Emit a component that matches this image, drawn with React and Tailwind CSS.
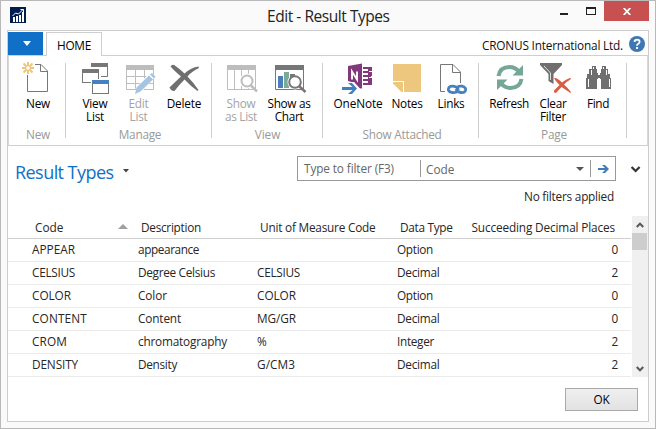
import React, { useLayoutEffect, useRef } from "react";

// Single-line label whose tracking is adjusted so that it spans `w` pixels.
function Label({ w, children, className = "" }) {
  const ref = useRef(null);
  useLayoutEffect(() => {
    const el = ref.current;
    el.style.letterSpacing = "0px";
    const natural = el.getBoundingClientRect().width;
    const gap = (w - natural) / children.length;
    el.style.letterSpacing = gap + "px";
  }, [w, children]);
  return (
    <span ref={ref} className={"inline-block whitespace-pre " + className}>
      {children}
    </span>
  );
}

function Tool({ lines, widths, box, className, muted, children }) {
  return (
    <div className={"flex shrink-0 flex-col items-center " + className}>
      <svg width={box[1]} height="36" viewBox={`${box[0]} 60 ${box[1]} 36`} className="block shrink-0">
        {children}
      </svg>
      <div className="flex flex-col items-center pt-px">
        {lines.map((line, i) => (
          <Label key={line} w={widths[i]} className={"h-[13px] leading-[13px] " + (muted ? "text-[#a3a3a3]" : "text-black")}>
            {line}
          </Label>
        ))}
      </div>
    </div>
  );
}

function Group({ title, w, className, children }) {
  return (
    <div className={"flex h-[75px] shrink-0 flex-col border-r border-[#cfcfcf] " + className}>
      <div className="-mt-[3px] flex h-[67px] shrink-0">{children}</div>
      <div className="-ml-[4px] flex h-[14px] shrink-0 items-center justify-center text-[#999]">
        <Label w={w}>{title}</Label>
      </div>
    </div>
  );
}

const rows = [
  [["APPEAR", 43], ["appearance", 61], ["", 0], ["Option", 36], "0"],
  [["CELSIUS", 43], ["Degree Celsius", 77], ["CELSIUS", 43], ["Decimal", 42.5], "2"],
  [["COLOR", 39], ["Color", 29], ["COLOR", 39], ["Option", 36], "0"],
  [["CONTENT", 55], ["Content", 43], ["MG/GR", 39], ["Decimal", 42.5], "0"],
  [["CROM", 35], ["chromatography", 89], ["%", 10], ["Integer", 37], "2"],
  [["DENSITY", 46], ["Density", 39], ["G/CM3", 38], ["Decimal", 42.5], "2"],
];

const columns = "grid grid-cols-[106px_119px_140px_1fr] ";

function Ribbon() {
  return (
    <div className="flex h-[91px] border border-y-[#cfcfcf] border-x-[#d8d8d8] pt-[7px]">
      <Group title="New" w={24} className="w-[57px] pl-[6px]">
        <Tool lines={["New"]} widths={[24]} box={[9, 58]} className="-ml-[6px] w-[58px]">
          <path d="M27.5 75V91.5H47.5V71L41 64.5H35M40.5 64.5V71.5H47.5" fill="none" stroke="#777" />
          <g stroke="#edc57a" strokeWidth="2">
            <path d="M28 62V66M28 70V74M22 68H26M30 68H34M23.5 63.5L26.5 66.5M29.5 69.5L32.5 72.5M32.5 63.5L29.5 66.5M26.5 69.5L23.5 72.5" />
          </g>
          <circle cx="28" cy="68" r="2.3" fill="#fff" stroke="#edc57a" />
        </Tool>
      </Group>
      <Group title="Manage" w={42.5} className="w-[146px] pl-[7px]">
        <Tool lines={["View", "List"]} widths={[25, 18]} box={[73, 44]} className="w-[44px]">
          <g fill="#fff" stroke="#777">
            <path d="M91.500 63.500H107.500V76.500H101" />
            <path d="M81 68h19v16H81z" stroke="none" />
            <rect x="82.500" y="69.500" width="16" height="13" />
          </g>
          <path d="M91 63h17v4H91zM82 69h17v4H82z" fill="#777" />
          <rect x="91" y="79" width="18" height="15" fill="#fff" />
          <rect x="92.500" y="80.500" width="16" height="13" fill="#fff" stroke="#777" />
          <path d="M92 80h17v4H92z" fill="#4581c0" />
        </Tool>
        <Tool lines={["Edit", "List"]} widths={[20, 18]} box={[117, 43]} className="w-[43px]" muted>
          <path d="M126.500 65.500H153.500V89.500H126.500zM135.500 70V89M144.500 70V89M127 76.500H153M127 83.500H153" fill="none" stroke="#bdbdbd" />
          <path d="M126 65h28v5H126z" fill="#bdbdbd" />
          <path d="M138 91L153 74" stroke="#fff" strokeWidth="7" />
          <path d="M135 94L136.500 87.500L149 75.500L153 79.500L140.500 91.500zM150 74.500L152 73L155.500 76.500L154 78.500z" fill="#a5c3e3" />
        </Tool>
        <Tool lines={["Delete"]} widths={[34.5]} box={[160, 48]} className="w-[48px]">
          <path d="M170.500 66.500Q172.500 63.500 175.500 66Q180 69 184.500 73.500Q191 67.500 198.500 66.500L199 68Q192 71 187.500 76.500Q193 82 198.500 90L197.500 91Q190.500 86 184.500 79.500Q179 85 174.500 91Q171.500 91.500 169.500 87.500Q175 82 181 76.500Q174 70.500 170.500 66.500z" fill="#6f6f6f" />
        </Tool>
      </Group>
      <Group title="View" w={25.500} className="w-[111px] pl-[5px]">
        <Tool lines={["Show", "as List"]} widths={[29, 32]} box={[217, 48]} className="w-[48px]" muted>
          <path d="M227.500 65.500H255.500V89.500H227.500zM234.500 70V89M241.500 70V89M248.500 70V89" fill="none" stroke="#bdbdbd" />
          <path d="M227 65h29v5H227z" fill="#bdbdbd" />
          <circle cx="247" cy="81" r="7.500" fill="#fff" />
          <circle cx="247" cy="81" r="5.500" fill="#fff" stroke="#bdbdbd" strokeWidth="2" />
          <path d="M251 85.500L257 91.500" stroke="#bdbdbd" strokeWidth="2.500" />
        </Tool>
        <Tool lines={["Show as", "Chart"]} widths={[43, 28.500]} box={[265, 48]} className="w-[48px]">
          <path d="M275.500 65.500H303.500V89.500H275.500z" fill="#fff" stroke="#777" />
          <path d="M275 65h29v5H275z" fill="#777" />
          <path d="M278 76h5v12H278z" fill="#4a7fbb" />
          <path d="M284 72h5v16H284z" fill="#7aaa98" />
          <path d="M290 74h5v14H290z" fill="#777" />
          <circle cx="295" cy="82" r="7.500" fill="#fff" />
          <path d="M290 74h5v3l-5 3z" fill="#777" />
          <circle cx="295" cy="82" r="5.800" fill="#fff" stroke="#777" strokeWidth="2" />
          <path d="M299 86L305.500 92" stroke="#777" strokeWidth="2.500" />
        </Tool>
      </Group>
      <Group title="Show Attached" w={79} className="w-[156px] pl-[7px]">
        <Tool lines={["OneNote"]} widths={[49]} box={[330, 56]} className="w-[56px]">
          <path d="M348 66L362 63.500V88.500L355 88V83L348 81z" fill="#82397c" />
          <path d="M363 67h9v4h-1v1h1v4h-1v1h1v8h-9v-2h5v-2h-5v-2h5v-2h-5v-2h5v-2h-5v-2h5v-2h-5z" fill="#82397c" />
          <path d="M369 71.500H372M369 77.500H372" stroke="#fff" />
          <path d="M352 79.500V71.500L357 79.500V71.500" fill="none" stroke="#fff" strokeWidth="1.900" />
          <path d="M342 86.500H355L350.500 82H354L360 88.500L354 95H350L354.500 90.500H342z" fill="#fff" />
          <path d="M342 87H352.500L348 83H352L357 88.500L352 94H348L352.500 90H342z" fill="#447fbd" />
        </Tool>
        <Tool lines={["Notes"]} widths={[31]} box={[386, 42]} className="w-[42px]">
          <path d="M393 64h28v28H393z" fill="#edc77e" />
          <path d="M392 81.500H403.500V93" fill="none" stroke="#fff" />
          <path d="M392 82.500L402.500 93H392z" fill="#fff" />
        </Tool>
        <Tool lines={["Links"]} widths={[27]} box={[430, 42]} className="ml-[2px] w-[42px]">
          <path d="M445 91.500H440.500V64.500H453L460.500 72V83M452.500 64.500V72.500H460.500" fill="none" stroke="#777" />
          <path d="M446 85h22v9h-22z" fill="#fff" />
          <g fill="none" stroke="#4581c0" strokeWidth="2.800">
            <path d="M458 91Q456 93 452 92.500Q447.500 91.500 448.500 88.500Q449.500 86 453 86.200Q457 86.500 458.500 90" />
            <path d="M457 88Q458 85.500 462 86.200Q466.500 87.500 465.500 90.500Q464.500 93 461 92.500Q457 92 456 89" />
          </g>
        </Tool>
      </Group>
      <Group title="Page" w={26} className="w-[148px] pl-[7px]">
        <Tool lines={["Refresh"]} widths={[39.500]} box={[486, 46]} className="w-[46px]">
          <g fill="none" stroke="#74a895" strokeWidth="4">
            <path d="M498.500 76Q500 67 509.500 67Q515 67 519 71.500" />
            <path d="M521.500 79Q520 88 510.500 88Q505 88 501 83.500" />
          </g>
          <path d="M523 65V75.500H512.500zM497 90V79.500H507.500z" fill="#74a895" />
        </Tool>
        <Tool lines={["Clear", "Filter"]} widths={[27, 26]} box={[532, 42]} className="w-[42px]">
          <path d="M540 63H562V65L553.500 74V84L548.500 81V74L540 65z" fill="#6f6f6f" />
          <path d="M544 66L550.500 73V80" fill="none" stroke="#ddd" />
          <path d="M554 78.500Q556 76.500 562 82.500Q567 78.500 570.500 78L571 79Q567 81.500 564 84.500Q568 88 571 92L570.500 93Q566 90 561.500 87L556 93Q553.500 93 554 90.500L559.500 85Q556 81.500 554 78.500z" fill="#d95f43" />
        </Tool>
        <Tool lines={["Find"]} widths={[22]} box={[576, 44]} className="ml-[2px] w-[44px]">
          <path d="M592 66h4v3h1v4h1v2h2v-2h1v-4h1v-3h4v3h2v5h2v4h1v11H601V79h-1v-1h-2v1h-1v10H586V78h1v-4h2v-5h3z" fill="#6f6f6f" />
          <path d="M593.500 67v2M603.500 67v2M591.500 70v5M606.500 70v5M588.500 79v8M609.500 79v8" stroke="#fff" strokeWidth="1" />
        </Tool>
      </Group>
    </div>
  );
}

export default function App() {
  return (
    <div className="flex h-[429px] w-[656px] flex-col overflow-hidden border border-[#b9b9b9] bg-[#fafafa] font-['Open_Sans','Noto_Sans',sans-serif] text-[11.800px] leading-[14px] text-[#262626]">
      <div className="flex h-[29px] shrink-0 items-start">
        <svg width="16" height="16" viewBox="0 0 16 16" className="ml-[9px] mt-[6px]">
          <path d="M0 0h16v16H0z" fill="#001d4e" />
          <path d="M3 10h2v5H3zM6 9h2v6H6zM9 8h2v7H9zM12 5h2v10h-2z" fill="#fff" />
          <path d="M2.500 9L5.500 6L8.500 7L13 2.500M10.500 2.500H13.500V5" fill="none" stroke="#fff" />
        </svg>
        <div className="flex flex-1 justify-start pl-[241px] pt-[5px]">
          <Label w={122.500} className="text-[15.500px] leading-[20px] text-[#222]">Edit - Result Types</Label>
        </div>
        <svg width="82" height="19" viewBox="557 1 82 19" className="mr-[1px] shrink-0">
          <path d="M560 13h8v2h-8z" fill="#222" />
          <path d="M586 7h10v8H586zM587 9v5h8V9z" fill="#222" fillRule="evenodd" />
        </svg>
        <div className="-ml-[36px] mr-[6px] flex h-[20px] w-[45px] shrink-0 items-center justify-center bg-[#c75050]">
          <svg width="8" height="7" viewBox="0 0 8 7" className="mt-[1px]">
            <path d="M0.700 0L7.300 7M7.300 0L0.700 7" stroke="#fff" strokeWidth="1.800" />
          </svg>
        </div>
      </div>

      <div className="ml-[6px] flex h-[392px] w-[642px] shrink-0 flex-col border border-[#cdcdcd] bg-white">
        <div className="-mb-px flex h-[25px] shrink-0 items-stretch">
          <div className="mt-[1px] flex h-[23px] w-[35px] items-center justify-center bg-[#1070c8]">
            <svg width="8" height="5" viewBox="0 0 8 5" className="ml-[2px]">
              <path d="M0 0H8L4 5z" fill="#fff" />
            </svg>
          </div>
          <div className="z-10 ml-[3px] mt-[1px] flex h-[24px] w-[56px] items-center justify-center border border-b-0 border-[#cfcfcf] bg-white pt-[1px] text-black">
            <Label w={34}>HOME</Label>
          </div>
          <div className="ml-auto flex items-center pr-[3px] pt-[3px]">
            <Label w={141} className="-mt-px text-[#111]">CRONUS International Ltd.</Label>
            <svg width="16" height="16" viewBox="0 0 16 16" className="-mt-[2px] ml-[6px]">
              <circle cx="8" cy="8" r="8" fill="#3f77b2" />
              <path d="M5.500 6Q5.600 3.600 8.100 3.600Q10.600 3.700 10.600 5.700Q10.600 6.900 9.300 7.700Q8 8.500 8 9.700" fill="none" stroke="#fff" strokeWidth="1.800" />
              <path d="M7 11h2v2H7z" fill="#fff" />
            </svg>
          </div>
        </div>
        <Ribbon />

        <div className="flex h-[70px] shrink-0">
          <div className="flex h-[30px] items-center pl-[7px] pt-[21px]">
            <Label w={98.500} className="text-[18px] leading-[24px] text-[#0f70c8]">Result Types</Label>
            <svg width="6" height="4" viewBox="0 0 6 4" className="-mt-[2px] ml-[9px]">
              <path d="M0 0H6L3 3.500z" fill="#444" />
            </svg>
          </div>
          <div className="ml-auto flex flex-col pt-[10px]">
            <div className="flex items-center">
              <div className="flex h-[25px] w-[319px] items-center border border-[#999] text-[#666]">
                <div className="flex h-[17px] w-[123px] items-center border-r border-[#999] pb-[2px] pl-[6px]">
                  <Label w={90}>Type to filter (F3)</Label>
                </div>
                <div className="flex h-[17px] w-[170px] items-center border-r border-[#999] pl-[5px] pr-[6px]">
                  <Label w={28.500}>Code</Label>
                  <svg width="8" height="4" viewBox="0 0 8 4" className="ml-auto">
                    <path d="M0 0H8L4 4z" fill="#555" />
                  </svg>
                </div>
                <svg width="11" height="10" viewBox="0 0 11 10" className="ml-[7px] mt-px">
                  <path d="M0 4H7L4 1H7L11 5L7 9H4L7 6H0z" fill="#417db8" />
                </svg>
              </div>
              <svg width="10" height="7" viewBox="0 0 10 7" className="ml-[15px] mr-[7px] mt-px">
                <path d="M0.600 1L4.600 5L8.600 1" fill="none" stroke="#333" strokeWidth="2.200" />
              </svg>
            </div>
            <div className="mt-[8px] flex justify-end pr-[34px]">
              <Label w={90}>No filters applied</Label>
            </div>
          </div>
        </div>

        <div className="flex h-[161px] shrink-0 justify-between">
          <div className="w-[623px]">
            <div className={columns + "h-[23px] items-center border-b border-[#cfcfcf] pb-[1px] pl-[27px] pr-[16px]"}>
              <div className="flex items-center justify-between pr-[13px]">
                <Label w={28.500}>Code</Label>
                <svg width="10" height="5" viewBox="0 0 10 5" className="-mt-px">
                  <path d="M0 5H10L5 0z" fill="#a0a0a0" />
                </svg>
              </div>
              <div><Label w={60}>Description</Label></div>
              <div><Label w={115.500}>Unit of Measure Code</Label></div>
              <div className="flex justify-between">
                <Label w={52.500}>Data Type</Label>
                <Label w={143.500}>Succeeding Decimal Places</Label>
              </div>
            </div>
            {rows.map((row) => (
              <div key={row[0][0]} className={columns + "h-[23px] items-center border-b border-[#ebebeb] pb-[2px] pl-[24px] pr-[13px]"}>
                {row.slice(0, 3).map(([text, w], i) => (
                  <div key={i} className="h-[14px]">{text && <Label w={w}>{text}</Label>}</div>
                ))}
                <div className="flex justify-between">
                  <Label w={row[3][1]}>{row[3][0]}</Label>
                  <Label w={6.500}>{row[4]}</Label>
                </div>
              </div>
            ))}
          </div>
          <div className="flex w-[16px] flex-col items-center bg-[#f0f0f0]">
            <svg width="8" height="6" viewBox="0 0 8 6" className="mt-[6px] shrink-0">
              <path d="M0.800 5L4 1.600L7.200 5" fill="none" stroke="#555" strokeWidth="2" />
            </svg>
            <div className="mr-px mt-[5px] h-[17px] w-[15px] shrink-0 bg-[#cdcdcd]" />
            <svg width="8" height="6" viewBox="0 0 8 6" className="mb-[5px] mt-auto shrink-0">
              <path d="M0.800 1L4 4.400L7.200 1" fill="none" stroke="#555" strokeWidth="2" />
            </svg>
          </div>
        </div>

        <div className="flex flex-1 items-start justify-end pr-[10px] pt-[11px]">
          <div className="flex h-[23px] w-[73px] items-center justify-center border border-[#a9a9a9] bg-linear-to-b from-[#efefef] to-[#e2e2e2] pb-px text-black">
            <Label w={16}>OK</Label>
          </div>
        </div>
      </div>
    </div>
  );
}
